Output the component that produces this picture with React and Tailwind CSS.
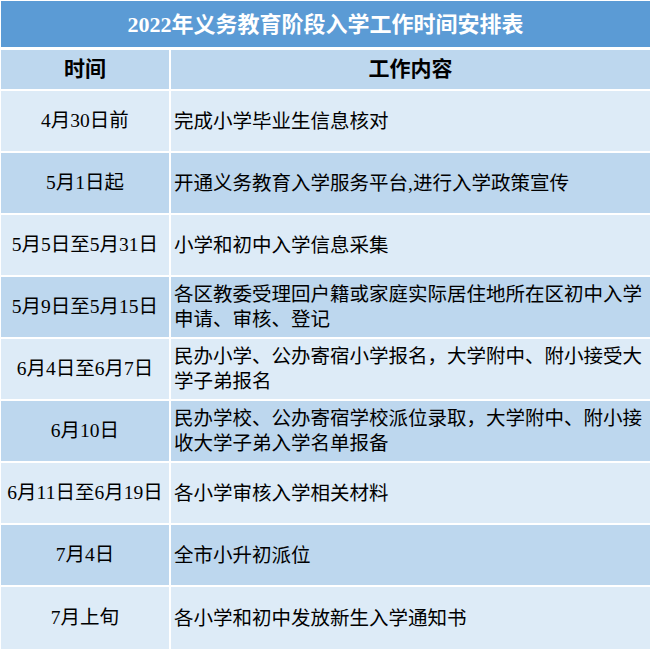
const rows = [
  ["4月30日前", "完成小学毕业生信息核对"],
  ["5月1日起", "开通义务教育入学服务平台,进行入学政策宣传"],
  ["5月5日至5月31日", "小学和初中入学信息采集"],
  ["5月9日至5月15日", "各区教委受理回户籍或家庭实际居住地所在区初中入学申请、审核、登记"],
  ["6月4日至6月7日", "民办小学、公办寄宿小学报名，大学附中、附小接受大学子弟报名"],
  ["6月10日", "民办学校、公办寄宿学校派位录取，大学附中、附小接收大学子弟入学名单报备"],
  ["6月11日至6月19日", "各小学审核入学相关材料"],
  ["7月4日", "全市小升初派位"],
  ["7月上旬", "各小学和初中发放新生入学通知书"],
];

export default function App() {
  return (
    <div
      className="w-[651px] h-[649px] bg-white p-[1px] text-black overflow-hidden"
      style={{ fontFamily: '"Liberation Serif", "Noto Sans CJK SC", serif' }}
    >
      <div className="h-[46px] bg-[#5b9bd5] flex items-center justify-center text-white font-bold text-[22px]">
        2022年义务教育阶段入学工作时间安排表
      </div>

      <div className="mt-[3px] grid grid-cols-[168px_479px] gap-[2px]">
        <div className="h-[39px] bg-[#bdd7ee] flex items-center justify-center font-bold text-[21px]">
          时间
        </div>
        <div className="h-[39px] bg-[#bdd7ee] flex items-center justify-center font-bold text-[21px]">
          工作内容
        </div>

        {rows.map(([time, text], i) => {
          const bg = i % 2 === 0 ? "bg-[#ddebf7]" : "bg-[#bdd7ee]";
          const h = i === rows.length - 1 ? "h-[62px]" : "h-[60px]";
          return [
            <div
              key={"t" + i}
              className={`${bg} ${h} flex items-center justify-center text-[19.5px]`}
            >
              {time}
            </div>,
            <div
              key={"c" + i}
              className={`${bg} ${h} flex items-center pl-[3px] pr-[4px] text-[19.5px] leading-[25px]`}
            >
              {text}
            </div>,
          ];
        })}
      </div>
    </div>
  );
}
